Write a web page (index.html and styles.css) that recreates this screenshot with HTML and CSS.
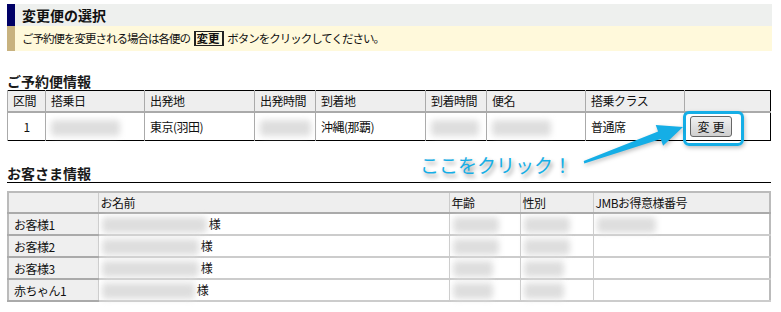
FILE: index.html
```html
<!DOCTYPE html>
<html lang="ja">
<head>
    <meta charset="UTF-8">
    <title>変更便の選択</title>
    <link rel="stylesheet" href="styles.css">
</head>
<body>
    <div class="page">
        <!-- Title -->
        <div class="title-bar">変更便の選択</div>
        <div class="notice">ご予約便を変更される場合は各便の <span class="key">変更</span> ボタンをクリックしてください。</div>

        <!-- Flight info -->
        <h2 class="section">ご予約便情報</h2>
        <table class="flight">
            <colgroup>
                <col style="width:38px"><col style="width:99px"><col style="width:110px"><col style="width:61px">
                <col style="width:110px"><col style="width:61px"><col style="width:99px"><col style="width:99px"><col>
            </colgroup>
            <tr>
                <th>区間</th><th>搭乗日</th><th>出発地</th><th>出発時間</th>
                <th>到着地</th><th>到着時間</th><th>便名</th><th>搭乗クラス</th><th></th>
            </tr>
            <tr>
                <td class="num">1</td>
                <td><span class="blur" style="width:69px"></span></td>
                <td>東京(羽田)</td>
                <td><span class="blur" style="width:51px"></span></td>
                <td>沖縄(那覇)</td>
                <td><span class="blur" style="width:48px"></span></td>
                <td><span class="blur" style="width:59px"></span></td>
                <td>普通席</td>
                <td><button class="change-btn">変更</button></td>
            </tr>
        </table>

        <!-- Passenger info -->
        <h2 class="section underline">お客さま情報</h2>
        <table class="guest">
            <colgroup>
                <col style="width:90px"><col style="width:351px"><col style="width:71px"><col style="width:73px"><col>
            </colgroup>
            <tr>
                <th class="label"></th><th>お名前</th><th>年齢</th><th>性別</th><th>JMBお得意様番号</th>
            </tr>
            <tr>
                <td class="label">お客様1</td>
                <td><span class="blur" style="width:105px"></span> 様</td>
                <td><span class="blur" style="width:46px"></span></td>
                <td><span class="blur" style="width:46px"></span></td>
                <td><span class="blur" style="width:59px"></span></td>
            </tr>
            <tr>
                <td class="label">お客様2</td>
                <td><span class="blur" style="width:97px"></span> 様</td>
                <td><span class="blur" style="width:46px"></span></td>
                <td><span class="blur" style="width:46px"></span></td>
                <td></td>
            </tr>
            <tr>
                <td class="label">お客様3</td>
                <td><span class="blur" style="width:97px"></span> 様</td>
                <td><span class="blur" style="width:40px"></span></td>
                <td><span class="blur" style="width:40px"></span></td>
                <td></td>
            </tr>
            <tr>
                <td class="label">赤ちゃん1</td>
                <td><span class="blur" style="width:93px"></span> 様</td>
                <td><span class="blur" style="width:40px"></span></td>
                <td><span class="blur" style="width:40px"></span></td>
                <td></td>
            </tr>
        </table>
    </div>

    <!-- Annotation -->
    <div class="callout-box"></div>
    <svg class="callout-arrow" width="781" height="312" viewBox="0 0 781 312">
        <polygon points="583.7,161.1 658.1,131.5 655.7,124.9 683,127 663.1,145.7 660.7,139.1 584.3,163.4" fill="#15aee6"/>
    </svg>
    <div class="callout-text">ここをクリック！</div>
</body>
</html>
```

FILE: styles.css
```css
/* General */
* {
    margin: 0;
    padding: 0;
    box-sizing: border-box;
}

body {
    background-color: #fff;
    font-family: "Noto Sans CJK JP", "Noto Sans", sans-serif;
    font-size: 12px;
    color: #111;
    position: relative;
    width: 781px;
    height: 312px;
    overflow: hidden;
}

.page {
    width: 764px;
    margin-left: 7px;
    padding-top: 4px;
}

/* Title */
.title-bar {
    height: 22px;
    line-height: 22px;
    background-color: #eef0ee;
    border-left: 8px solid #000066;
    padding-left: 7px;
    font-size: 14px;
    font-weight: bold;
    color: #111;
    width: 765px;
}

.notice {
    height: 25px;
    line-height: 25px;
    background-color: #fff9db;
    border-left: 8px solid #c8b27f;
    padding-left: 7px;
    font-size: 11.5px;
    letter-spacing: -1px;
    width: 765px;
}

.notice .key {
    display: inline-block;
    border: 1px solid #222;
    border-left-width: 2px;
    border-right-width: 2px;
    line-height: 13px;
    padding: 0 2px 0 1px;
    margin: 0 2px;
    letter-spacing: 0;
    font-weight: bold;
}

/* Sections */
.section {
    font-size: 14px;
    font-weight: bold;
    color: #1a1a1a;
    line-height: 16px;
    margin-top: 22px;
    margin-bottom: 1px;
}

.section.underline {
    margin-top: 24px;
    padding-bottom: 1px;
    border-bottom: 1px solid #000;
    margin-bottom: 8px;
}

/* Tables */
table {
    border-collapse: collapse;
    table-layout: fixed;
    width: 764px;
    letter-spacing: -0.5px;
}

th {
    font-weight: normal;
    text-align: left;
    background-color: #eeeeee;
}

.flight {
    border: 1px solid #000;
}

.flight th {
    height: 21px;
    padding: 0 5px;
    border-left: 1px solid #aaa;
    border-bottom: 2px solid #aaa;
}

.flight td {
    height: 29px;
    padding: 0 5px;
    border-left: 1px solid #aaa;
}

.flight .num {
    text-align: center;
}

.guest {
    border: 2px solid #bbb;
}

.guest th {
    height: 21px;
    padding: 0 2px;
    border-left: 1px solid #ccc;
    border-bottom: 2px solid #aaa;
}

.guest td {
    height: 22px;
    padding: 0 2px 0 3px;
    border-left: 1px solid #ccc;
    border-bottom: 2px solid #ccc;
}

.guest .label {
    background-color: #efefef;
    padding-left: 5px;
    border-bottom: 2px solid #aaa;
}

.blur {
    display: inline-block;
    height: 16px;
    vertical-align: middle;
    background-color: #dedede;
    border-radius: 4px;
    filter: blur(3px);
}

.change-btn {
    font-family: "Noto Sans CJK JP", sans-serif;
    font-size: 12px;
    letter-spacing: 3px;
    padding: 0 3px 0 6px;
    height: 21px;
    width: 42px;
    border: 1px solid #666;
    border-radius: 3px;
    background: linear-gradient(#f2f2f2, #cfcfcf);
    color: #111;
}

/* Annotation */
.callout-box {
    position: absolute;
    left: 683px;
    top: 111px;
    width: 61px;
    height: 35px;
    border: 3px solid #15aee6;
    border-radius: 6px;
    box-shadow: 1px 2px 4px rgba(0, 0, 0, 0.25);
}

.callout-arrow {
    position: absolute;
    left: 0;
    top: 0;
    filter: drop-shadow(1px 2px 2px rgba(0, 0, 0, 0.25));
}

.callout-text {
    position: absolute;
    left: 420px;
    top: 152px;
    font-size: 19px;
    line-height: 26px;
    color: #15aee6;
    text-shadow: 2px 3px 4px rgba(0, 0, 0, 0.45);
}
```
